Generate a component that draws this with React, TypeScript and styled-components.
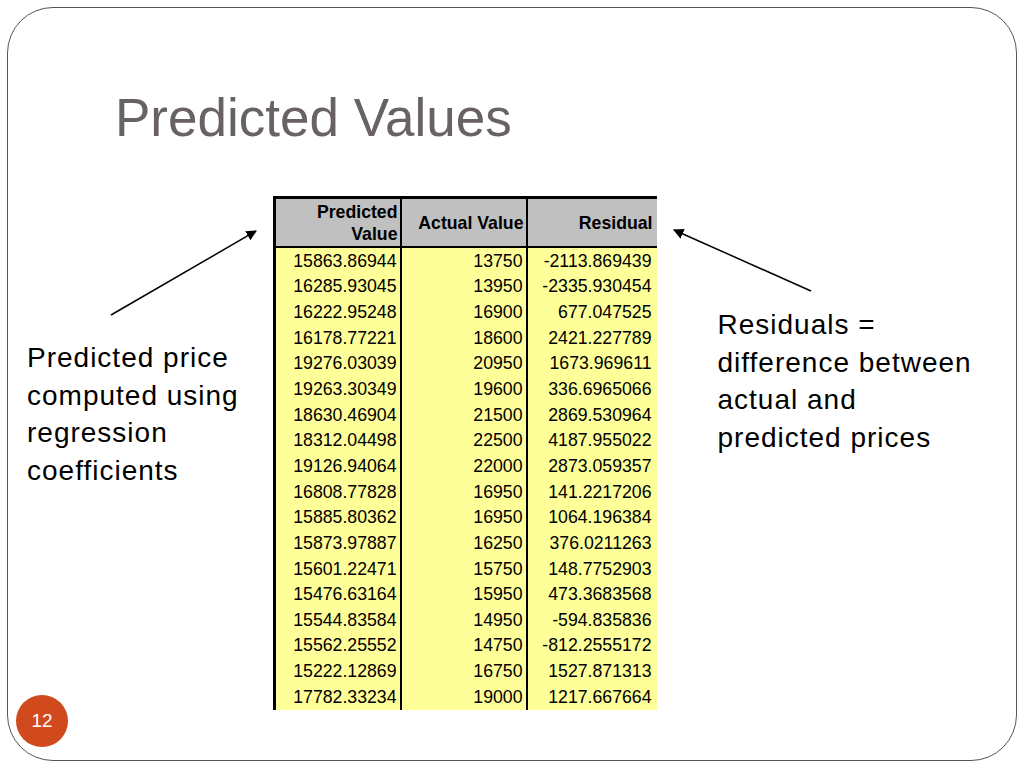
import React from "react";
import styled, { createGlobalStyle } from "styled-components";

const Global = createGlobalStyle`
  html, body { margin: 0; padding: 0; background: #ffffff; }
  body { font-family: "Liberation Sans", Arial, sans-serif; }
`;

const Page = styled.div`
  position: relative;
  width: 1024px;
  height: 768px;
  padding: 7px;
  box-sizing: border-box;
  background: #ffffff;
`;

const Slide = styled.div`
  position: relative;
  width: 100%;
  height: 100%;
  box-sizing: border-box;
  border: 1.5px solid #555555;
  border-radius: 46px;
`;

const Title = styled.h1`
  margin: 0;
  padding: 83px 0 0 107px;
  font-family: "Liberation Sans", Arial, sans-serif;
  font-weight: 400;
  font-size: 53px;
  line-height: 53px;
  color: #686262;
`;

const Content = styled.div`
  display: grid;
  grid-template-columns: 264.5px 384px 1fr;
  margin-top: 52px;
  align-items: start;
`;

const Note = styled.p<{ $top: number; $left: number }>`
  margin: ${(p) => p.$top}px 0 0 ${(p) => p.$left}px;
  font-family: "Liberation Sans", Arial, sans-serif;
  font-size: 28px;
  letter-spacing: 1px;
  line-height: 37.5px;
  color: #000000;
  white-space: nowrap;
`;

const Table = styled.table`
  border-collapse: separate;
  border-spacing: 0;
  font-family: "Liberation Sans", Arial, sans-serif;
  font-size: 17.7px;
  color: #000000;
  table-layout: fixed;
`;

const HeadCell = styled.th<{ $first?: boolean; $last?: boolean; $w: number }>`
  width: ${(p) => p.$w}px;
  box-sizing: border-box;
  height: 52px;
  background: #c0c0c0;
  border-top: 3px solid #000;
  border-bottom: 2px solid #000;
  border-left: ${(p) => (p.$first ? "3px solid #000" : "none")};
  border-right: ${(p) => (p.$last ? "none" : "2px solid #000")};
  text-align: right;
  vertical-align: middle;
  font-weight: 700;
  line-height: 22px;
  padding: 0 ${(p) => (p.$last ? 4 : 2)}px 0 0;
  white-space: nowrap;
`;

const Cell = styled.td<{ $first?: boolean; $last?: boolean }>`
  height: 25.65px;
  box-sizing: border-box;
  background: #ffff99;
  border-left: ${(p) => (p.$first ? "3px solid #000" : "none")};
  border-right: ${(p) => (p.$last ? "none" : "2px solid #000")};
  text-align: right;
  vertical-align: middle;
  padding: 0 ${(p) => (p.$last ? 5 : 3)}px 0 0;
  line-height: 20px;
  white-space: nowrap;
`;

const Badge = styled.div`
  position: absolute;
  left: 16px;
  top: 695px;
  width: 52px;
  height: 52px;
  border-radius: 50%;
  background: #d14a1d;
  color: #ffffff;
  display: flex;
  align-items: center;
  justify-content: center;
  font-family: "Liberation Sans", Arial, sans-serif;
  font-size: 19px;
`;

const Arrows = styled.svg`
  position: absolute;
  left: 0;
  top: 0;
  pointer-events: none;
`;

const rows: [string, string, string][] = [
  ["15863.86944", "13750", "-2113.869439"],
  ["16285.93045", "13950", "-2335.930454"],
  ["16222.95248", "16900", "677.047525"],
  ["16178.77221", "18600", "2421.227789"],
  ["19276.03039", "20950", "1673.969611"],
  ["19263.30349", "19600", "336.6965066"],
  ["18630.46904", "21500", "2869.530964"],
  ["18312.04498", "22500", "4187.955022"],
  ["19126.94064", "22000", "2873.059357"],
  ["16808.77828", "16950", "141.2217206"],
  ["15885.80362", "16950", "1064.196384"],
  ["15873.97887", "16250", "376.0211263"],
  ["15601.22471", "15750", "148.7752903"],
  ["15476.63164", "15950", "473.3683568"],
  ["15544.83584", "14950", "-594.835836"],
  ["15562.25552", "14750", "-812.2555172"],
  ["15222.12869", "16750", "1527.871313"],
  ["17782.33234", "19000", "1217.667664"],
];

export default function App() {
  return (
    <Page>
      <Global />
      <Slide>
        <Title>Predicted Values</Title>
        <Content>
          <Note $top={143} $left={19}>
            Predicted price
            <br />
            computed using
            <br />
            regression
            <br />
            coefficients
          </Note>
          <Table>
            <thead>
              <tr>
                <HeadCell $first $w={129}>
                  Predicted
                  <br />
                  Value
                </HeadCell>
                <HeadCell $w={126}>Actual Value</HeadCell>
                <HeadCell $last $w={129}>
                  Residual
                </HeadCell>
              </tr>
            </thead>
            <tbody>
              {rows.map((r, i) => (
                <tr key={i}>
                  <Cell $first>{r[0]}</Cell>
                  <Cell>{r[1]}</Cell>
                  <Cell $last>{r[2]}</Cell>
                </tr>
              ))}
            </tbody>
          </Table>
          <Note $top={110} $left={61}>
            Residuals =
            <br />
            difference between
            <br />
            actual and
            <br />
            predicted prices
          </Note>
        </Content>
      </Slide>
      <Badge>12</Badge>
      <Arrows width="1024" height="768" viewBox="0 0 1024 768">
        <defs>
          <marker
            id="head"
            viewBox="0 0 10 10"
            refX="9"
            refY="5"
            markerWidth="7"
            markerHeight="7"
            orient="auto"
            markerUnits="strokeWidth"
          >
            <path d="M0 0 L10 5 L0 10 z" fill="#000" />
          </marker>
        </defs>
        <line x1="111" y1="315" x2="256" y2="231" stroke="#000" strokeWidth="1.5" markerEnd="url(#head)" />
        <line x1="811" y1="291" x2="674" y2="230" stroke="#000" strokeWidth="1.5" markerEnd="url(#head)" />
      </Arrows>
    </Page>
  );
}
